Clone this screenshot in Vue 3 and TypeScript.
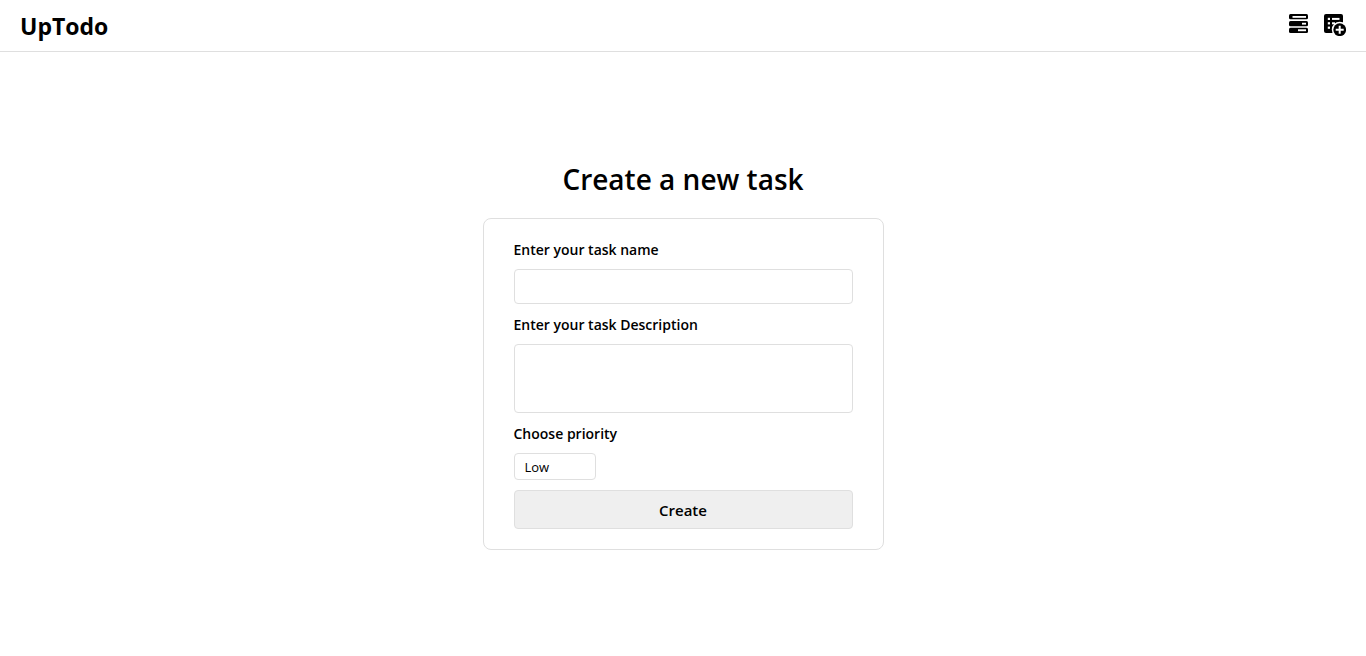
<script setup lang="ts">
import { ref } from 'vue'

type Priority = 'Low' | 'Medium' | 'High'

const priorities: Priority[] = ['Low', 'Medium', 'High']
const taskName = ref('')
const description = ref('')
const priority = ref<Priority>('Low')
</script>

<template>
  <div class="page">
    <header class="topbar">
      <h1 class="brand">UpTodo</h1>
      <nav class="actions">
        <a href="#tasks" aria-label="All tasks">
          <svg width="24" height="24" viewBox="0 0 24 24">
            <g fill="#000">
              <rect x="3" y="2" width="19" height="5.3" rx="1.5" />
              <rect x="3" y="9" width="19" height="5.2" rx="1.5" />
              <rect x="3" y="15.8" width="19" height="5.3" rx="1.5" />
            </g>
            <g fill="#fff">
              <rect x="6.5" y="4" width="13.5" height="1.8" />
              <rect x="16" y="10.8" width="4" height="1.8" />
              <rect x="12" y="17.3" width="8" height="1.9" />
            </g>
          </svg>
        </a>
        <a href="#create" aria-label="Create task">
          <svg width="24" height="24" viewBox="0 0 24 24">
            <rect x="2" y="2" width="19" height="19" rx="2" fill="#000" />
            <g fill="#fff">
              <rect x="5.8" y="5.8" width="2.2" height="2.2" />
              <rect x="5.8" y="10.2" width="2.2" height="2.2" />
              <rect x="5.8" y="14.6" width="2.2" height="2.2" />
              <rect x="10" y="5.9" width="7.5" height="2" />
              <rect x="10" y="10.3" width="3" height="2" />
            </g>
            <circle cx="17.7" cy="17.7" r="7.9" fill="#fff" />
            <circle cx="17.7" cy="17.7" r="6.4" fill="#000" />
            <path d="M17.7 13.7v8M13.7 17.7h8" stroke="#fff" stroke-width="2" />
          </svg>
        </a>
      </nav>
    </header>

    <main class="content">
      <h2 class="title">Create a new task</h2>
      <form class="card" @submit.prevent>
        <label for="task-name">Enter your task name</label>
        <input id="task-name" v-model="taskName" class="field name" type="text" />
        <label for="task-description">Enter your task Description</label>
        <textarea id="task-description" v-model="description" class="field description"></textarea>
        <label for="task-priority">Choose priority</label>
        <select id="task-priority" v-model="priority" class="field priority">
          <option v-for="item in priorities" :key="item" :value="item">{{ item }}</option>
        </select>
        <button class="field create" type="submit">Create</button>
      </form>
    </main>
  </div>
</template>

<style>
body {
  margin: 0;
  background: #fff;
}
</style>

<style scoped>
.page,
.page * {
  box-sizing: border-box;
}

.page {
  display: flex;
  flex-direction: column;
  min-height: 100vh;
  color: #000;
  font-family: "Open Sans", "Noto Sans", sans-serif;
}

.topbar {
  display: flex;
  justify-content: space-between;
  align-items: flex-start;
  padding: 12px 20px 11px;
  border-bottom: 1px solid #dfdfdf;
}

.brand {
  margin: 0;
  font-size: 23px;
  line-height: 28px;
  font-weight: 700;
}

.actions {
  display: flex;
  gap: 12px;
}

.actions svg {
  display: block;
}

.content {
  flex: 1;
  display: flex;
  flex-direction: column;
  align-items: center;
  justify-content: center;
  gap: 18px;
}

.title {
  margin: 0;
  font-size: 28px;
  line-height: 42px;
  font-weight: 600;
}

.card {
  display: flex;
  flex-direction: column;
  gap: 10px;
  width: 401px;
  max-width: 100%;
  padding: 20px 30px;
  border: 1px solid #dfdfdf;
  border-radius: 8px;
}

label {
  padding-top: 1px;
  font-size: 14px;
  line-height: 19px;
  font-weight: 600;
}

.field {
  margin: 0;
  border: 1px solid #dfdfdf;
  border-radius: 4px;
  background: #fff;
  color: #000;
  font-family: inherit;
  outline: none;
}

.name {
  height: 35px;
  padding: 0 10px;
}

.description {
  height: 69px;
  padding: 8px 10px;
  resize: none;
}

.priority {
  align-self: flex-start;
  width: 82px;
  height: 27px;
  padding: 0 10px;
  font-size: 13px;
  appearance: none;
}

.create {
  height: 39px;
  background: #efefef;
  font-size: 15px;
  font-weight: 600;
}
</style>
